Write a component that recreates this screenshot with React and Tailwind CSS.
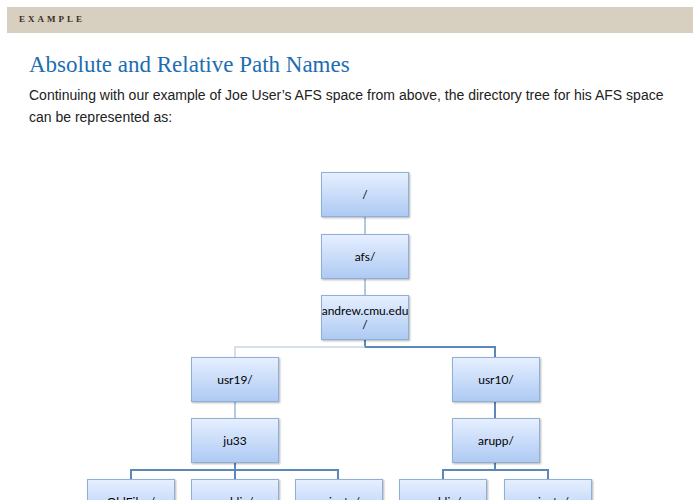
export default function App() {
  const boxes = [
    { x: 321, y: 172, t: "/" },
    { x: 321, y: 234, t: "afs/" },
    { x: 321, y: 295, t: "andrew.cmu.edu /" },
    { x: 191, y: 357, t: "usr19/" },
    { x: 452, y: 357, t: "usr10/" },
    { x: 191, y: 418, t: "ju33" },
    { x: 452, y: 418, t: "arupp/" },
    { x: 87, y: 479, t: "OldFiles/" },
    { x: 191, y: 479, t: "public/" },
    { x: 295, y: 479, t: "private/" },
    { x: 399, y: 479, t: "public/" },
    { x: 504, y: 479, t: "private/" },
  ];
  return (
    <div className="w-[700px] h-[500px] bg-white overflow-hidden relative" style={{ fontFamily: "'Liberation Sans', Arial, sans-serif" }}>
      <div className="absolute left-0 top-0 w-[700px] h-[500px]">
        <svg width="700" height="500" className="absolute left-0 top-0">
          <g stroke="#5b88b8" strokeWidth="2" fill="none">
            <path d="M365 216V234M365 277V295" stroke="#9bb7d6" strokeWidth="1.5" />
            <path d="M365 339V347H495V357" />
            <path d="M365 347H235V357" stroke="#c9d6e4" strokeWidth="1.5" />
            <path d="M235 401V418" stroke="#9bb7d6" strokeWidth="1.5" />
            <path d="M495 401V418" />
            <path d="M235 462V479M131 479V470H338V479" />
            <path d="M495 462V470M443 479V470H548V479" />
          </g>
        </svg>
        {boxes.map((b, i) => (
          <div key={i} className="absolute w-[88px] h-[45px] border border-[#8fb0d6] bg-gradient-to-b from-[#e6efff] to-[#aecaf3] shadow-[1px_1px_2px_rgba(0,0,0,0.3)] flex items-center justify-center text-center text-[12px] leading-[14px] text-black" style={{ left: b.x, top: b.y, fontFamily: "Lato, 'Open Sans', sans-serif" }}>
            {b.t === "andrew.cmu.edu /" ? <span>andrew.cmu.edu<br />/</span> : b.t}
          </div>
        ))}
      </div>
      <div className="relative pt-[7px] px-[7px]">
        <div className="h-[26px] bg-[#d7cfbf] flex items-center pl-[12px] text-[9px] font-bold tracking-[3px] text-[#3a2e22]" style={{ fontFamily: "'Liberation Serif', serif" }}>EXAMPLE</div>
        <div className="pl-[22px] pr-[10px]">
          <h1 className="mt-[18px] text-[23px] leading-[28px] text-[#1d6db3]" style={{ fontFamily: "'Liberation Serif', Georgia, serif" }}>Absolute and Relative Path Names</h1>
          <p className="mt-[5px] text-[14px] leading-[22px] text-[#222]">Continuing with our example of Joe User’s AFS space from above, the directory tree for his AFS space can be represented as:</p>
        </div>
      </div>
    </div>
  );
}
